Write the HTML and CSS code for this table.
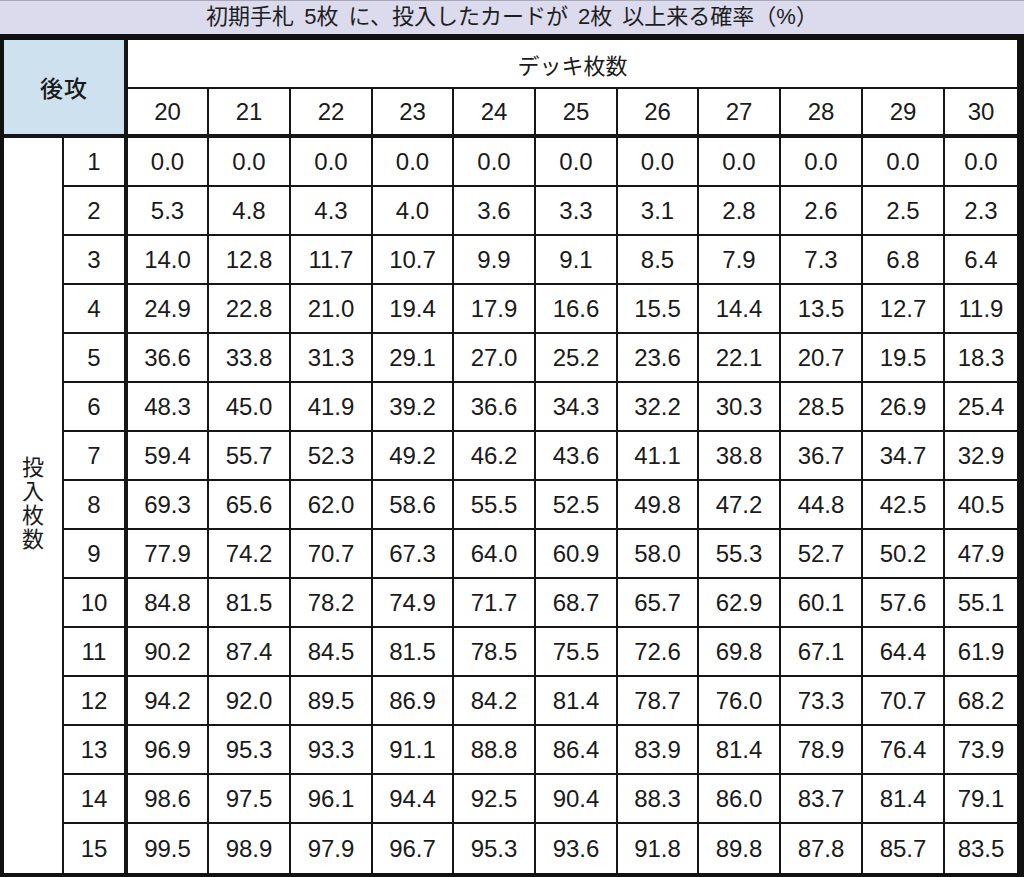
FILE: index.html
```html
<!DOCTYPE html>
<html lang="ja">
<head>
<meta charset="utf-8">
<title>確率表</title>
<link rel="stylesheet" href="styles.css">
</head>
<body>
<div class="title">初期手札 5枚 に、投入したカードが 2枚 以上来る確率（%）</div>
<table class="grid">
<colgroup>
<col class="w-a"><col class="w-b">
<col class="w81"><col class="w82"><col class="w82"><col class="w81"><col class="w82"><col class="w82"><col class="w81"><col class="w82"><col class="w82"><col class="w82"><col class="w72">
</colgroup>
<thead>
<tr class="r49">
<th class="corner" colspan="2" rowspan="2">後攻</th>
<th class="deck" colspan="11">デッキ枚数</th>
</tr>
<tr class="r49">
<th class="dh">20</th><th class="dh">21</th><th class="dh">22</th><th class="dh">23</th><th class="dh">24</th><th class="dh">25</th><th class="dh">26</th><th class="dh">27</th><th class="dh">28</th><th class="dh">29</th><th class="dh last">30</th>
</tr>
</thead>
<tbody>
<tr class="r49"><td class="vert" rowspan="15"><span>投入枚数</span></td><td class="num">1</td><td>0.0</td><td>0.0</td><td>0.0</td><td>0.0</td><td>0.0</td><td>0.0</td><td>0.0</td><td>0.0</td><td>0.0</td><td>0.0</td><td class="last">0.0</td></tr>
<tr class="r49"><td class="num">2</td><td>5.3</td><td>4.8</td><td>4.3</td><td>4.0</td><td>3.6</td><td>3.3</td><td>3.1</td><td>2.8</td><td>2.6</td><td>2.5</td><td class="last">2.3</td></tr>
<tr class="r49"><td class="num">3</td><td>14.0</td><td>12.8</td><td>11.7</td><td>10.7</td><td>9.9</td><td>9.1</td><td>8.5</td><td>7.9</td><td>7.3</td><td>6.8</td><td class="last">6.4</td></tr>
<tr class="r49"><td class="num">4</td><td>24.9</td><td>22.8</td><td>21.0</td><td>19.4</td><td>17.9</td><td>16.6</td><td>15.5</td><td>14.4</td><td>13.5</td><td>12.7</td><td class="last">11.9</td></tr>
<tr class="r49"><td class="num">5</td><td>36.6</td><td>33.8</td><td>31.3</td><td>29.1</td><td>27.0</td><td>25.2</td><td>23.6</td><td>22.1</td><td>20.7</td><td>19.5</td><td class="last">18.3</td></tr>
<tr class="r49"><td class="num">6</td><td>48.3</td><td>45.0</td><td>41.9</td><td>39.2</td><td>36.6</td><td>34.3</td><td>32.2</td><td>30.3</td><td>28.5</td><td>26.9</td><td class="last">25.4</td></tr>
<tr class="r49"><td class="num">7</td><td>59.4</td><td>55.7</td><td>52.3</td><td>49.2</td><td>46.2</td><td>43.6</td><td>41.1</td><td>38.8</td><td>36.7</td><td>34.7</td><td class="last">32.9</td></tr>
<tr class="r49"><td class="num">8</td><td>69.3</td><td>65.6</td><td>62.0</td><td>58.6</td><td>55.5</td><td>52.5</td><td>49.8</td><td>47.2</td><td>44.8</td><td>42.5</td><td class="last">40.5</td></tr>
<tr class="r49"><td class="num">9</td><td>77.9</td><td>74.2</td><td>70.7</td><td>67.3</td><td>64.0</td><td>60.9</td><td>58.0</td><td>55.3</td><td>52.7</td><td>50.2</td><td class="last">47.9</td></tr>
<tr class="r49"><td class="num">10</td><td>84.8</td><td>81.5</td><td>78.2</td><td>74.9</td><td>71.7</td><td>68.7</td><td>65.7</td><td>62.9</td><td>60.1</td><td>57.6</td><td class="last">55.1</td></tr>
<tr class="r49"><td class="num">11</td><td>90.2</td><td>87.4</td><td>84.5</td><td>81.5</td><td>78.5</td><td>75.5</td><td>72.6</td><td>69.8</td><td>67.1</td><td>64.4</td><td class="last">61.9</td></tr>
<tr class="r49"><td class="num">12</td><td>94.2</td><td>92.0</td><td>89.5</td><td>86.9</td><td>84.2</td><td>81.4</td><td>78.7</td><td>76.0</td><td>73.3</td><td>70.7</td><td class="last">68.2</td></tr>
<tr class="r49"><td class="num">13</td><td>96.9</td><td>95.3</td><td>93.3</td><td>91.1</td><td>88.8</td><td>86.4</td><td>83.9</td><td>81.4</td><td>78.9</td><td>76.4</td><td class="last">73.9</td></tr>
<tr class="r49"><td class="num">14</td><td>98.6</td><td>97.5</td><td>96.1</td><td>94.4</td><td>92.5</td><td>90.4</td><td>88.3</td><td>86.0</td><td>83.7</td><td>81.4</td><td class="last">79.1</td></tr>
<tr class="r49 final"><td class="num">15</td><td>99.5</td><td>98.9</td><td>97.9</td><td>96.7</td><td>95.3</td><td>93.6</td><td>91.8</td><td>89.8</td><td>87.8</td><td>85.7</td><td class="last">83.5</td></tr>
</tbody>
</table>
</body>
</html>
```
FILE: styles.css
```css
html, body {
  margin: 0;
  padding: 0;
  background: #ffffff;
}
body {
  width: 1024px;
  height: 877px;
  overflow: hidden;
  font-family: "Liberation Sans", "Noto Sans CJK JP", sans-serif;
  color: #1a1a1a;
}
.title {
  box-sizing: border-box;
  height: 34px;
  border-top: 1px solid #a9a8b8;
  background: #dcdbee;
  text-align: center;
  font-size: 22px;
  line-height: 31px;
  color: #1e1e1e;
  white-space: nowrap;
  word-spacing: 4px;
}
.grid {
  table-layout: fixed;
  width: 1024px;
  border-collapse: separate;
  border-spacing: 0;
  border-style: solid;
  border-color: #111;
  border-width: 6px 7px 4px 4px;
  font-size: 24px;
}
.w-a { width: 60px; }
.w-b { width: 64px; }
.w81 { width: 81px; }
.w82 { width: 82px; }
.w72 { width: 72px; }
.grid th, .grid td {
  box-sizing: border-box;
  padding: 0;
  text-align: center;
  vertical-align: middle;
  font-weight: normal;
  line-height: 26px;
  border-style: solid;
  border-color: #161616;
  border-width: 0 2px 2px 0;
}
.r49 { height: 49px; }
.grid .corner {
  background: #cde1ee;
  border-right-width: 4px;
  border-bottom-width: 4px;
  font-family: "Noto Sans CJK JP", sans-serif;
  font-size: 23px;
  font-weight: 500;
  letter-spacing: 1px;
}
.grid .deck {
  border-right-width: 0;
  font-family: "Noto Sans CJK JP", sans-serif;
  font-size: 22px;
}
.grid .dh {
  border-bottom-width: 4px;
}
.grid .last {
  border-right-width: 0;
}
.grid .num {
  border-right-width: 4px;
}
.grid .vert {
  border-bottom-width: 0;
  font-family: "Noto Sans CJK JP", sans-serif;
  font-size: 22px;
}
.vert span {
  writing-mode: vertical-rl;
  text-orientation: upright;
  letter-spacing: 2px;
  line-height: 24px;
  display: inline-block;
}
.final td {
  border-bottom-width: 0;
}
```
